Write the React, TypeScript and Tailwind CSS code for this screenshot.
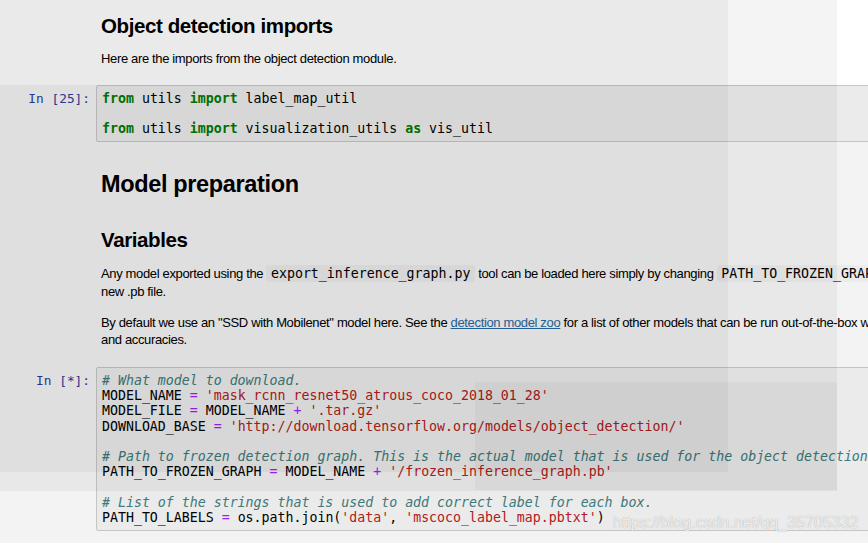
import React from "react";

const mono = "font-['DejaVu_Sans_Mono',monospace]";
const sans = "font-['Liberation_Sans',Arial,sans-serif]";

const K = ({ children }: { children: React.ReactNode }) => (
  <span className="text-[#008000] font-bold">{children}</span>
);
const C = ({ children }: { children: React.ReactNode }) => (
  <span className="text-[#408080] italic">{children}</span>
);
const S = ({ children }: { children: React.ReactNode }) => (
  <span className="text-[#ba2121]">{children}</span>
);
const O = ({ children }: { children: React.ReactNode }) => (
  <span className="text-[#aa22ff]">{children}</span>
);

const Chip = ({ children }: { children: React.ReactNode }) => (
  <code
    className={`${mono} text-[13.25px] tracking-normal bg-[#f7f7f7] rounded-[3px] px-[4.5px] py-[1px]`}
  >
    {children}
  </code>
);

function CodeCell({ prompt, lines }: { prompt: string; lines: React.ReactNode[] }) {
  return (
    <div className="flex">
      <div
        className={`${mono} w-[96px] shrink-0 text-right pr-[6px] pt-[5.6px] text-[12.8px] leading-[15.22px] text-[#303f9f]`}
      >
        {prompt}
      </div>
      <div className="flex-1 border border-[#cfcfcf] bg-[#f7f7f7] rounded-[2px] py-[4.6px] px-[5px]">
        <div className={`${mono} text-[13.25px] leading-[15.22px] text-black whitespace-pre`}>
          {lines.map((l, i) => (
            <div key={i} className="h-[15.22px]">
              {l}
            </div>
          ))}
        </div>
      </div>
    </div>
  );
}

function TextCell({ children, className = "" }: { children: React.ReactNode; className?: string }) {
  return (
    <div className={`flex ${className}`}>
      <div className="w-[96px] shrink-0" />
      <div className={`pl-[5px] flex-1 ${sans} text-black`}>{children}</div>
    </div>
  );
}

export default function App() {
  return (
    <div className="relative w-[868px] h-[543px] overflow-hidden bg-white">
      <div className="w-[1400px] flex flex-col pt-[14px]">
        <TextCell>
          <h2 className="text-[20.5px] tracking-[-0.4px] font-bold leading-[24px]">
            Object detection imports
          </h2>
        </TextCell>
        <TextCell className="mt-[11.7px]">
          <p className="text-[13px] tracking-[-0.35px] leading-[17.3px] whitespace-nowrap">
            Here are the imports from the object detection module.
          </p>
        </TextCell>

        <div className="mt-[18px]">
          <CodeCell
            prompt="In [25]:"
            lines={[
              <>
                <K>from</K> utils <K>import</K> label_map_util
              </>,
              <> </>,
              <>
                <K>from</K> utils <K>import</K> visualization_utils <K>as</K> vis_util
              </>,
            ]}
          />
        </div>

        <TextCell className="mt-[28.3px]">
          <h1 className="text-[23.5px] tracking-[-0.35px] font-bold leading-[28px]">
            Model preparation
          </h1>
        </TextCell>
        <TextCell className="mt-[30.3px]">
          <h2 className="text-[20.5px] tracking-[-0.4px] font-bold leading-[24px]">Variables</h2>
        </TextCell>
        <TextCell className="mt-[12.8px]">
          <p className="text-[13px] tracking-[-0.35px] leading-[17.3px] whitespace-nowrap">
            Any model exported using the <Chip>export_inference_graph.py</Chip> tool can be loaded
            here simply by changing <Chip>PATH_TO_FROZEN_GRAPH</Chip> to point to a
            <br />
            new .pb file.
          </p>
        </TextCell>
        <TextCell className="mt-[13.7px]">
          <p className="text-[13px] tracking-[-0.35px] leading-[17.3px] whitespace-nowrap">
            By default we use an "SSD with Mobilenet" model here. See the{" "}
            <a className="text-[#296eaa] underline">detection model zoo</a> for a list of other
            models that can be run out-of-the-box with varying speeds
            <br />
            and accuracies.
          </p>
        </TextCell>

        <div className="mt-[19.2px]">
          <CodeCell
            prompt="In [*]:"
            lines={[
              <C># What model to download.</C>,
              <>
                MODEL_NAME <O>=</O> <S>'mask_rcnn_resnet50_atrous_coco_2018_01_28'</S>
              </>,
              <>
                MODEL_FILE <O>=</O> MODEL_NAME <O>+</O> <S>'.tar.gz'</S>
              </>,
              <>
                DOWNLOAD_BASE <O>=</O> <S>'http://download.tensorflow.org/models/object_detection/'</S>
              </>,
              <> </>,
              <C># Path to frozen detection graph. This is the actual model that is used for the object detection.</C>,
              <>
                PATH_TO_FROZEN_GRAPH <O>=</O> MODEL_NAME <O>+</O> <S>'/frozen_inference_graph.pb'</S>
              </>,
              <> </>,
              <C># List of the strings that is used to add correct label for each box.</C>,
              <>
                PATH_TO_LABELS <O>=</O> os.path.join(<S>'data'</S>, <S>'mscoco_label_map.pbtxt'</S>)
              </>,
            ]}
          />
        </div>
      </div>

      {/* dimming overlays */}
      <div className="pointer-events-none absolute left-0 top-0 w-[837px] h-[491px] bg-[rgba(0,0,0,0.043)]" />
      <div className="pointer-events-none absolute left-0 top-0 w-[728px] h-[472px] bg-[rgba(0,0,0,0.04)]" />
      <div className="pointer-events-none absolute left-0 top-[85px] w-[868px] h-[458px] bg-[rgba(0,0,0,0.047)]" />
      <div className="pointer-events-none absolute left-[475px] top-[382px] w-[362px] h-[108px] bg-[rgba(0,0,0,0.035)]" />

      {/* watermark */}
      <div
        className={`pointer-events-none absolute left-[613px] top-[513px] ${sans} text-[16px] leading-[20px] text-[rgba(255,255,255,0.8)] [text-shadow:0_0_1px_rgba(0,0,0,0.35)] whitespace-nowrap`}
      >
        https://blog.csdn.net/qq_35705332
      </div>
    </div>
  );
}
